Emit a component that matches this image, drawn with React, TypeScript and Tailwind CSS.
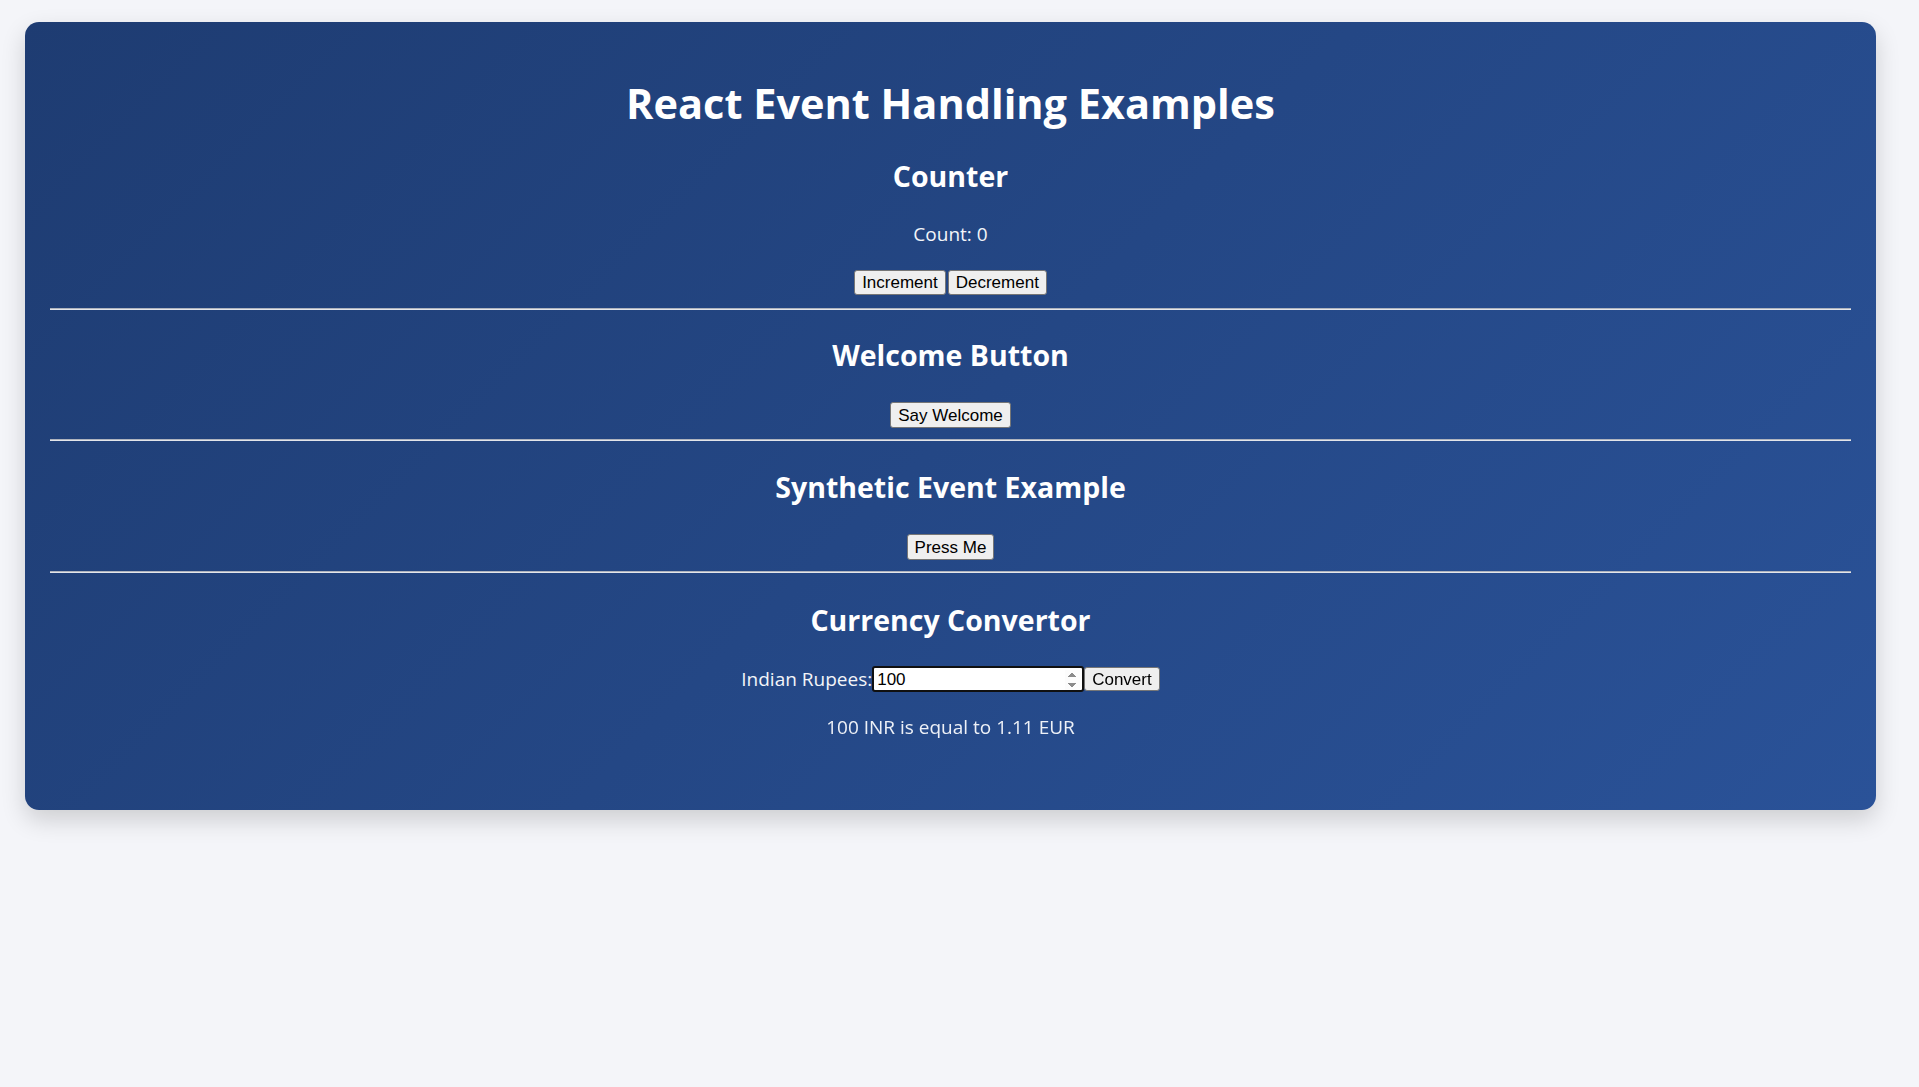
import { useState } from "react"

const btn =
  "px-[7px] bg-[#efefef] border border-[#767676] rounded-[3px] text-black text-[17px] leading-[19px] font-['Liberation_Sans',Arial,sans-serif] hover:bg-[#e5e5e5]"

const heading = "text-[28.5px] leading-[36px] font-bold text-white"

const Divider = () => (
  <div className="h-0 border-t border-b border-t-[#aeb3bd] border-b-[#e3e5ea]" />
)

const Counter = () => {
  const [count, setCount] = useState(0)
  return (
    <section className="flex flex-col items-center">
      <h2 className={`mt-[31px] ${heading}`}>Counter</h2>
      <p className="mt-[28px] text-[19px] leading-[24px] text-[#f3f5f9]">Count: {count}</p>
      <div className="mt-[24px] flex gap-[2px]">
        <button className={`${btn} h-[25px]`} onClick={() => setCount(count + 1)}>
          Increment
        </button>
        <button className={`${btn} h-[25px]`} onClick={() => setCount(count - 1)}>
          Decrement
        </button>
      </div>
    </section>
  )
}

const WelcomeButton = () => {
  return (
    <section className="flex flex-col items-center">
      <h2 className={`mt-[27px] ${heading}`}>Welcome Button</h2>
      <button className={`${btn} h-[26px] mt-[29px]`} onClick={() => alert("Welcome!")}>
        Say Welcome
      </button>
    </section>
  )
}

const SyntheticEvent = () => {
  return (
    <section className="flex flex-col items-center">
      <h2 className={`mt-[28px] ${heading}`}>Synthetic Event Example</h2>
      <button className={`${btn} h-[26px] mt-[29px]`} onClick={() => alert("I was clicked")}>
        Press Me
      </button>
    </section>
  )
}

const CurrencyConvertor = () => {
  const [rupees, setRupees] = useState("100")
  const [result, setResult] = useState("100 INR is equal to 1.11 EUR")

  const convert = () => {
    const eur = (Number(rupees) * 0.0111).toFixed(2)
    setResult(`${rupees} INR is equal to ${eur} EUR`)
  }

  return (
    <section className="flex flex-col items-center">
      <h2 className={`mt-[29px] ${heading}`}>Currency Convertor</h2>
      <div className="mt-[28px] flex items-center">
        <label className="text-[19px] leading-[24px] text-[#f3f5f9]">Indian Rupees:</label>
        <input
          type="number"
          autoFocus
          value={rupees}
          onChange={(e) => setRupees(e.target.value)}
          className="h-[26px] w-[212px] pl-[3px] pr-[2px] pt-[1px] bg-white border-2 border-[#101010] rounded-[3px] outline-none text-black text-[17px] leading-[20px] font-['Liberation_Sans',Arial,sans-serif]"
        />
        <button className={`${btn} h-[24px] leading-[18px]`} onClick={convert}>
          Convert
        </button>
      </div>
      <p className="mt-[23px] text-[19px] leading-[24px] text-[#eef1f7]">{result}</p>
    </section>
  )
}

export default function App() {
  return (
    <div className="min-h-screen box-content bg-[#f4f5f9] pt-[22px] pb-[40px] pl-[25px] pr-[43px] font-['Open_Sans','Noto_Sans',sans-serif]">
      <main className="rounded-[14px] bg-linear-135 from-[#1e3c72] to-[#2a5298] px-[25px] pt-[25px] pb-[71px] text-center shadow-[0_10px_25px_rgba(0,0,0,0.16)]">
        <h1 className="mt-[32px] text-[41.5px] leading-[48px] font-bold text-white">React Event Handling Examples</h1>
        <Counter />
        <div className="mt-[13px]">
          <Divider />
        </div>
        <WelcomeButton />
        <div className="mt-[11px]">
          <Divider />
        </div>
        <SyntheticEvent />
        <div className="mt-[11px]">
          <Divider />
        </div>
        <CurrencyConvertor />
      </main>
    </div>
  )
}
